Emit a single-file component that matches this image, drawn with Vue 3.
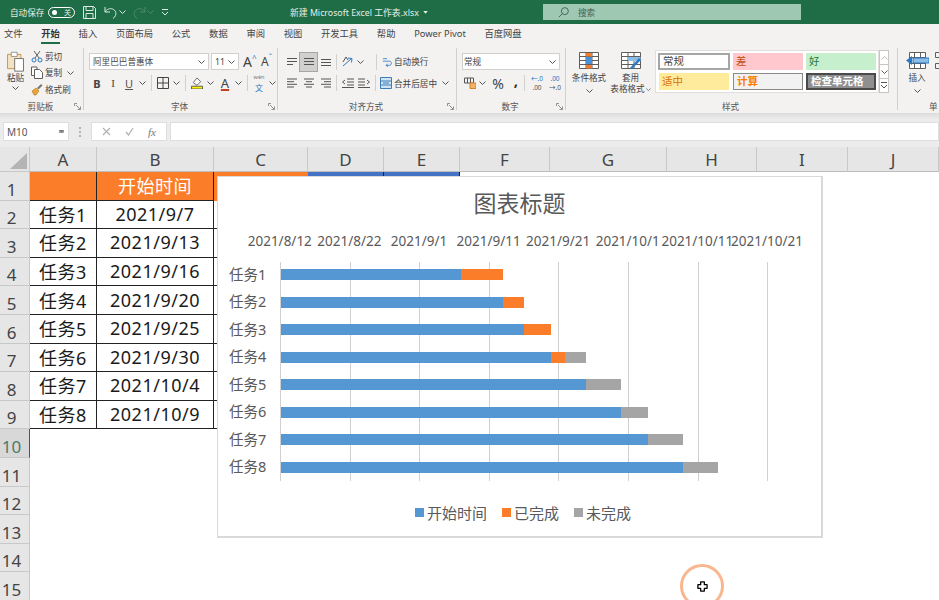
<template>
  <div class="window">
    <!-- title bar -->
    <div class="titlebar">
      <span class="autosave">自动保存</span>
      <span class="toggle"><i class="dot"></i><em>关</em></span>
      <svg class="qat save" viewBox="0 0 13 13"><path d="M.5.5h10l2 2v10H.5zM3 .5v4h7v-4M3 12.5V7.5h7v5" /></svg>
      <svg class="qat undo" viewBox="0 0 14 13"><path d="M1 1v5h5M1 6c2-3 5-4 7.5-3 3 1 4 4 3 6.500-.5 1.200-1.500 2.300-2.500 3" /></svg>
      <svg class="chev light" viewBox="0 0 7 4"><path d="M.5.5 3.500 3.500 6.500.5" /></svg>
      <svg class="qat redo" viewBox="0 0 14 13"><path d="M13 1v5H8M13 6c-2-3-5-4-7.500-3-3 1-4 4-3 6.500.5 1.200 1.500 2.300 2.500 3" /></svg>
      <svg class="chev dim" viewBox="0 0 7 4"><path d="M.5.5 3.500 3.500 6.500.5" /></svg>
      <svg class="custom" viewBox="0 0 8 7"><path d="M1 .5h6M1 3l3 3 3-3" /></svg>
      <span class="doc-name">新建 Microsoft Excel 工作表.xlsx</span>
      <svg class="chev-solid" viewBox="0 0 6 4"><path d="M0 0h6L3 3.500z" /></svg>
      <div class="search">
        <svg viewBox="0 0 12 12"><circle cx="7.500" cy="4.500" r="3.800" /><path d="M4.800 7.200 1 11" /></svg>
        <span>搜索</span>
      </div>
    </div>

    <!-- tabs -->
    <div class="tabs">
      <span v-for="t in tabs" :key="t" class="tab" :class="{ active: t === '开始' }">{{ t }}</span>
    </div>

    <!-- ribbon -->
    <div class="ribbon">
      <div class="group g-clip">
        <div class="g-body clip-body">
          <div class="paste">
            <svg viewBox="0 0 22 25">
              <path d="M1.500 4h16v17h-16z" fill="#f3e3c4" stroke="#c58a35" />
              <path d="M6 1.500h7v5H6z" fill="#fff" stroke="#8a8886" />
              <path d="M10 9h10.500v15H10z" fill="#fff" stroke="#605e5c" />
            </svg>
            <span>粘贴</span>
            <svg class="chev" viewBox="0 0 7 4"><path d="M.5.5 3.500 3.500 6.500.5" /></svg>
          </div>
          <div class="clip-list">
            <div class="clip-item">
              <svg viewBox="0 0 12 13"><path d="M3 1l5 7M9 1 4 8" fill="none" stroke="#605e5c" /><circle cx="3" cy="10" r="2" fill="none" stroke="#2b79c2" /><circle cx="9" cy="10" r="2" fill="none" stroke="#2b79c2" /></svg>
              <span>剪切</span>
            </div>
            <div class="clip-item">
              <svg viewBox="0 0 12 13"><path d="M3 9.500H.5V1H6v2M3.500 3.500h5l3 3v6h-8z" fill="#fff" stroke="#605e5c" /></svg>
              <span>复制</span>
              <svg class="chev copy-chev" viewBox="0 0 7 4"><path d="M.5.5 3.500 3.500 6.500.5" /></svg>
            </div>
            <div class="clip-item">
              <svg viewBox="0 0 12 13"><path d="M1 8l4-3 3 3-3 4H3z" fill="#e8a33d" stroke="#b9751b" stroke-width=".6" /><path d="M6 5l4-4 1.500 1.500-4 4z" fill="#777" /></svg>
              <span>格式刷</span>
            </div>
          </div>
        </div>
        <div class="g-label"><i></i><span>剪贴板</span><svg class="launcher" viewBox="0 0 7 7"><path d="M.5 3V.5H3M2 2l4 4M6.500 3.500v3h-3" /></svg></div>
      </div>
      <div class="sep"></div>

      <div class="group g-font">
        <div class="g-body">
          <div class="row first font-first">
            <div class="select font-name"><span>阿里巴巴普惠体</span><svg class="chev" viewBox="0 0 7 4"><path d="M.5.5 3.500 3.500 6.500.5" /></svg></div>
            <div class="select font-size"><span>11</span><svg class="chev" viewBox="0 0 7 4"><path d="M.5.5 3.500 3.500 6.500.5" /></svg></div>
            <span class="grow-a big">A<sup>^</sup></span>
            <span class="grow-a small">A<sup>ˇ</sup></span>
          </div>
          <div class="row second font-second">
            <b class="slot w16">B</b>
            <i class="slot w16 serif">I</i>
            <u class="slot w16">U</u>
            <span class="slot w10"><svg class="chev" viewBox="0 0 7 4"><path d="M.5.5 3.500 3.500 6.500.5" /></svg></span>
            <span class="vline v-a"></span>
            <span class="slot w16"><svg class="ic" viewBox="0 0 12 12"><path d="M.5.5h11v11H.5zM6 .5v11M.5 6h11" fill="none" stroke="#444" /></svg></span>
            <span class="slot w10"><svg class="chev" viewBox="0 0 7 4"><path d="M.5.5 3.500 3.500 6.500.5" /></svg></span>
            <span class="vline v-a"></span>
            <span class="slot w16"><svg class="ic" viewBox="0 0 12 13"><path d="M6 1 2 6l4 3 4-4z" fill="#fff" stroke="#605e5c" /><path d="M0 10h12v3H0z" fill="#fff200" /></svg></span>
            <span class="slot w10"><svg class="chev" viewBox="0 0 7 4"><path d="M.5.5 3.500 3.500 6.500.5" /></svg></span>
            <span class="slot w16 color-a">A</span>
            <span class="slot w10"><svg class="chev" viewBox="0 0 7 4"><path d="M.5.5 3.500 3.500 6.500.5" /></svg></span>
            <span class="vline v-a"></span>
            <span class="slot w16 wen"><small>wén</small><em>文</em></span>
            <span class="slot w10"><svg class="chev" viewBox="0 0 7 4"><path d="M.5.5 3.500 3.500 6.500.5" /></svg></span>
          </div>
        </div>
        <div class="g-label"><i></i><span>字体</span><svg class="launcher" viewBox="0 0 7 7"><path d="M.5 3V.5H3M2 2l4 4M6.500 3.500v3h-3" /></svg></div>
      </div>
      <div class="sep"></div>

      <div class="group g-align">
        <div class="g-body">
          <div class="row first align-first">
            <span class="slot w17"><svg class="ic" viewBox="0 0 12 9"><path d="M1 1h10M1 4h10M1 7h6" /></svg></span>
            <span class="slot w17 picked"><svg class="ic" viewBox="0 0 12 9"><path d="M1 1h10M1 4h10M1 7h10" /></svg></span>
            <span class="slot w17"><svg class="ic" viewBox="0 0 12 9"><path d="M1 2h10M1 5h10M1 8h10" /></svg></span>
            <span class="vline v-b"></span>
            <span class="slot w14"><svg class="ic" viewBox="0 0 12 12"><path d="M1 10 9 3M6 2l4 .5-.5 4" stroke="#2b79c2" /><path d="M1 6 4 1l2 3" /></svg></span>
            <span class="slot w10"><svg class="chev" viewBox="0 0 7 4"><path d="M.5.5 3.500 3.500 6.500.5" /></svg></span>
            <span class="vline v-c"></span>
            <span class="wide-btn wrap-btn"><svg class="ic" viewBox="0 0 12 12"><path d="M1 2h5M1 5h8c3 0 3 5 0 5H5M7 8l-2 2 2 2" stroke="#2b79c2" /></svg>自动换行</span>
          </div>
          <div class="row second align-second">
            <span class="slot w17"><svg class="ic" viewBox="0 0 12 10"><path d="M1 1h10M1 3.700h7M1 6.300h10M1 9h7" /></svg></span>
            <span class="slot w17"><svg class="ic" viewBox="0 0 12 10"><path d="M1 1h10M3 3.700h6M1 6.300h10M3 9h6" /></svg></span>
            <span class="slot w17"><svg class="ic" viewBox="0 0 12 10"><path d="M1 1h10M4 3.700h7M1 6.300h10M4 9h7" /></svg></span>
            <span class="vline v-b"></span>
            <span class="slot w14"><svg class="ic" viewBox="0 0 12 10"><path d="M5 1h7M5 4h7M5 7h7M0 9.500h12M3 2 .5 4 3 6" /></svg></span>
            <span class="slot w18"><svg class="ic" viewBox="0 0 12 10"><path d="M0 1h7M0 4h7M0 7h7M0 9.500h12M9 2l2.500 2L9 6" /></svg></span>
            <span class="vline v-d"></span>
            <span class="wide-btn"><svg class="ic" viewBox="0 0 12 12"><path d="M.5.5h11v11H.5z" fill="#cfe3f5" stroke="#3c7fb8" /><path d="M.5 4h11M.5 8h11M3 6h6" stroke="#3c7fb8" /></svg>合并后居中<svg class="chev merge-chev" viewBox="0 0 7 4"><path d="M.5.5 3.500 3.500 6.500.5" /></svg></span>
          </div>
        </div>
        <div class="g-label"><i></i><span>对齐方式</span><svg class="launcher" viewBox="0 0 7 7"><path d="M.5 3V.5H3M2 2l4 4M6.500 3.500v3h-3" /></svg></div>
      </div>
      <div class="sep"></div>

      <div class="group g-number">
        <div class="g-body">
          <div class="row first number-first">
            <div class="select number-name"><span>常规</span><svg class="chev" viewBox="0 0 7 4"><path d="M.5.5 3.500 3.500 6.500.5" /></svg></div>
          </div>
          <div class="row second number-second">
            <span class="slot w14"><svg class="ic" viewBox="0 0 12 12"><path d="M.5 1h9v5H.5zM3.500 1v5M6.500 1v5" /><path d="M6 6h6v5.500H6z" fill="#f2b463" stroke="#d9822b" /></svg></span>
            <span class="slot w10"><svg class="chev" viewBox="0 0 7 4"><path d="M.5.5 3.500 3.500 6.500.5" /></svg></span>
            <span class="slot w22 pct">%</span>
            <span class="slot w14 comma">,</span>
            <span class="vline v-e"></span>
            <span class="slot w18 dec"><em>←.0</em><em>.00</em></span>
            <span class="slot w18 dec"><em>.00</em><em>→.0</em></span>
          </div>
        </div>
        <div class="g-label"><i></i><span>数字</span><svg class="launcher" viewBox="0 0 7 7"><path d="M.5 3V.5H3M2 2l4 4M6.500 3.500v3h-3" /></svg></div>
      </div>
      <div class="sep"></div>

      <div class="group g-styles">
        <div class="g-body styles-body">
          <div class="big-btn cond">
            <svg viewBox="0 0 20 17"><path d="M.5.5h19v16H.5zM7 .5v16M13 .5v16M.5 4.500h19M.5 8.500h19M.5 12.500h19" fill="#fff" stroke="#605e5c" /><path d="M7 1h6v3.500H7zM7 13h6v3.500H7z" fill="#ed7d31" /><path d="M7 5h6v7H7z" fill="#4a90d9" /></svg>
            <span>条件格式</span>
            <svg class="chev" viewBox="0 0 7 4"><path d="M.5.5 3.500 3.500 6.500.5" /></svg>
          </div>
          <div class="big-btn table">
            <svg viewBox="0 0 20 17"><path d="M.5.5h19v16H.5zM7 .5v16M13 .5v16M.5 4.500h19M.5 8.500h19M.5 12.500h19" fill="#fff" stroke="#605e5c" /><path d="M7 5h12.500v4H7z" fill="#8cbce8" /><path d="M9 16 18 6l2 2-9 9z" fill="#2b79c2" /></svg>
            <span>套用</span>
            <span>表格格式<svg class="chev inline" viewBox="0 0 7 4"><path d="M.5.5 3.500 3.500 6.500.5" /></svg></span>
          </div>
          <div class="gallery">
            <span class="cs normal">常规</span>
            <span class="cs bad">差</span>
            <span class="cs good">好</span>
            <span class="cs neutral">适中</span>
            <span class="cs calc">计算</span>
            <span class="cs check">检查单元格</span>
          </div>
          <div class="scroller">
            <span><svg class="chev" viewBox="0 0 7 4"><path d="M.5 3.500 3.500.5l3 3" /></svg></span>
            <span><svg class="chev" viewBox="0 0 7 4"><path d="M.5.5 3.500 3.500 6.500.5" /></svg></span>
            <span><svg class="custom dark" viewBox="0 0 8 7"><path d="M1 .5h6M1 3l3 3 3-3" /></svg></span>
          </div>
        </div>
        <div class="g-label"><i></i><span>样式</span><i></i></div>
      </div>
      <div class="sep"></div>

      <div class="group g-cells">
        <div class="g-body cells-body">
          <div class="big-btn insert">
            <svg viewBox="0 0 23 17"><path d="M3.500.5h16v16h-16zM8.500.5v16M14.500.5v16M3.500 5.500h16M3.500 11.500h16" fill="#fff" stroke="#605e5c" /><path d="M7 6h16v5H7z" fill="#8cbce8" stroke="#2b79c2" /><path d="M0 8.500 6 4v9z" fill="#2b79c2" /></svg>
            <span>插入</span>
            <svg class="chev" viewBox="0 0 7 4"><path d="M.5.5 3.500 3.500 6.500.5" /></svg>
          </div>
          <svg class="cut-icon" viewBox="0 0 8 17"><path d="M.5.5h8M.5.5v5h8M.5 11.500h8v5H.5z" fill="none" stroke="#605e5c" /></svg>
        </div>
        <div class="g-label cells-label"><span>单</span></div>
      </div>
    </div>

    <!-- formula bar -->
    <div class="formula">
      <div class="namebox"><span>M10</span><svg class="chev-solid gray" viewBox="0 0 6 4"><path d="M0 0h6L3 3.500z" /></svg></div>
      <div class="grip"><i></i><i></i><i></i></div>
      <div class="fx-box">
        <svg viewBox="0 0 9 9"><path d="M1 1l7 7M8 1 1 8" /></svg>
        <svg viewBox="0 0 9 9"><path d="M1 5l2.500 3L8 1" /></svg>
        <em>fx</em>
      </div>
      <div class="fx-input"></div>
    </div>

    <!-- sheet -->
    <div class="sheet">
      <div class="corner"><i></i></div>
      <div v-for="c in columns" :key="c" class="col-head">{{ c }}</div>

      <template v-for="(row, r) in rows" :key="r">
        <div class="row-head" :class="{ current: r === 9 }">{{ r + 1 }}</div>
        <div
          v-for="(c, ci) in columns"
          :key="c"
          class="cell"
          :class="cellClass(r, ci)"
        >{{ row[ci] }}</div>
      </template>

      <!-- floating chart -->
      <div class="chart">
        <div class="chart-title">图表标题</div>
        <div class="axis">
          <span v-for="d in axisDates" :key="d">{{ d }}</span>
        </div>
        <div class="plot">
          <i
            v-for="(d, i) in axisDates"
            :key="d"
            class="gridline"
            :style="{ left: 52 + i * 69.6 + 'px' }"
          ></i>
          <div v-for="t in tasks" :key="t.name" class="plot-row">
            <span class="plot-label">{{ t.name }}</span>
            <span class="seg blue" :style="{ width: t.start * dayWidth + 'px' }"></span>
            <span class="seg orange" :style="{ width: t.done * dayWidth + 'px' }"></span>
            <span class="seg gray" :style="{ width: t.todo * dayWidth + 'px' }"></span>
          </div>
        </div>
        <div class="legend">
          <span><i class="blue"></i>开始时间</span>
          <span><i class="orange"></i>已完成</span>
          <span><i class="gray"></i>未完成</span>
        </div>
      </div>
    </div>

    <!-- recorded mouse pointer -->
    <div class="pointer">
      <svg viewBox="0 0 12 12"><path d="M4 1h4v3h3v4H8v3H4V8H1V4h3z" fill="#fff" stroke="#000" stroke-width="1.400" stroke-linejoin="round" /></svg>
    </div>
  </div>
</template>

<script setup>
const tabs = ['文件', '开始', '插入', '页面布局', '公式', '数据', '审阅', '视图', '开发工具', '帮助', 'Power Pivot', '百度网盘']
const columns = ['A', 'B', 'C', 'D', 'E', 'F', 'G', 'H', 'I', 'J']
const axisDates = ['2021/8/12', '2021/8/22', '2021/9/1', '2021/9/11', '2021/9/21', '2021/10/1', '2021/10/11', '2021/10/21']
const dayWidth = 6.93

const tasks = [
  { name: '任务1', date: '2021/9/7', start: 26, done: 6, todo: 0 },
  { name: '任务2', date: '2021/9/13', start: 32, done: 3, todo: 0 },
  { name: '任务3', date: '2021/9/16', start: 35, done: 4, todo: 0 },
  { name: '任务4', date: '2021/9/20', start: 39, done: 2, todo: 3 },
  { name: '任务5', date: '2021/9/25', start: 44, done: 0, todo: 5 },
  { name: '任务6', date: '2021/9/30', start: 49, done: 0, todo: 4 },
  { name: '任务7', date: '2021/10/4', start: 53, done: 0, todo: 5 },
  { name: '任务8', date: '2021/10/9', start: 58, done: 0, todo: 5 },
]

const rows = [
  ['', '开始时间'],
  ...tasks.map((t) => [t.name, t.date]),
  ...Array.from({ length: 6 }, () => []),
]

const cellClass = (r, c) => ({
  head: r === 0 && c < 3,
  sel: r === 0 && (c === 3 || c === 4),
  boxed: c < 2 && r < 9,
  under: c === 2 && r < 9,
})
</script>

<style>
html, body {
  margin: 0;
  overflow: hidden;
  background: #fff;
}
</style>

<style scoped>
.window {
  position: relative;
  width: 939px;
  height: 600px;
  overflow: hidden;
  font-family: "Noto Sans", "Noto Sans CJK SC", sans-serif;
  color: #444;
  background: #fff;
}

/* title bar */
.titlebar {
  display: flex;
  align-items: center;
  height: 24px;
  padding-left: 10px;
  box-sizing: border-box;
  background: #1f6d46;
  color: #e6efe9;
  font-size: 8.6px;
}
.autosave { width: 38px; white-space: nowrap; }
.toggle {
  display: flex;
  align-items: center;
  justify-content: space-between;
  width: 27px;
  height: 11px;
  padding: 0 3px;
  box-sizing: border-box;
  border: 1px solid #fff;
  border-radius: 6px;
  font-size: 7px;
}
.toggle .dot { width: 5px; height: 5px; border-radius: 50%; background: #fff; }
.toggle em { font-style: normal; }
.qat { fill: none; stroke: #dfeae4; stroke-width: 1; }
.save { width: 13px; height: 13px; margin-left: 8px; }
.undo { width: 14px; height: 13px; margin-left: 8px; }
.titlebar .light { margin-left: 1px; stroke: #dfeae4; }
.redo { width: 14px; height: 13px; margin-left: 6px; stroke: #4f8a6d; }
.titlebar .dim { margin-left: 1px; stroke: #4f8a6d; }
.custom { width: 8px; height: 7px; margin-left: 7px; fill: none; stroke: #dfeae4; }
.custom.dark { margin: 0; stroke: #555; }
.doc-name { margin-left: 121px; width: 129px; font-size: 8.8px; white-space: nowrap; }
.chev-solid { width: 5px; height: 3px; margin-left: 4px; fill: #e6efe9; }
.chev-solid.gray { fill: #777; margin: 0; }
.search {
  display: flex;
  align-items: center;
  width: 258px;
  height: 16px;
  margin-left: 115px;
  padding-left: 15px;
  box-sizing: border-box;
  background: #9fc8b3;
  color: #3f5f50;
}
.search svg { width: 11px; height: 11px; fill: none; stroke: #3f5f50; }
.search span { margin-left: 9px; font-size: 8.6px; }

/* tabs */
.tabs {
  display: flex;
  gap: 18.7px;
  height: 20px;
  padding-left: 4px;
  background: #f3f2f1;
  font-size: 9.3px;
  line-height: 20px;
  white-space: nowrap;
}
.tab.active {
  font-weight: 700;
  color: #333;
  box-shadow: inset 0 -2px 0 #1f6d46;
}

/* ribbon */
.ribbon {
  display: flex;
  height: 69px;
  background: #f3f2f1;
  font-size: 8.6px;
  overflow: hidden;
}
.sep { flex: none; width: 1px; height: 62px; margin-top: 4px; background: #d2d0ce; }
.group { flex: none; display: flex; flex-direction: column; }
.g-clip { width: 83px; }
.g-font { width: 193px; }
.g-align { width: 178px; }
.g-number { width: 108px; }
.g-styles { width: 331px; }
.g-cells { width: 41px; }
.g-body { height: 56px; }
.g-label {
  display: grid;
  grid-template-columns: 1fr auto 1fr;
  align-items: center;
  height: 12px;
  padding-right: 2px;
  white-space: nowrap;
  color: #555;
}
.launcher { justify-self: end; width: 7px; height: 7px; fill: none; stroke: #777; stroke-width: .8; }
.chev { width: 7px; height: 4px; flex: none; fill: none; stroke: #555; stroke-width: 1; }
.ic { width: 12px; height: 12px; fill: none; stroke: #555; stroke-width: 1; }

.row { display: flex; align-items: center; }
.row.first { height: 17px; margin-top: 9px; }
.row.second { height: 18px; margin-top: 4px; }
.slot { display: flex; align-items: center; justify-content: center; height: 18px; flex: none; font-style: normal; }
.w10 { width: 10px; }
.w14 { width: 14px; }
.w16 { width: 16px; }
.w17 { width: 17px; }
.w18 { width: 18px; }
.w22 { width: 22px; }
.vline { flex: none; width: 1px; height: 16px; background: #d2d0ce; }

.select {
  display: flex;
  align-items: center;
  justify-content: space-between;
  height: 17px;
  padding: 0 3px;
  box-sizing: border-box;
  background: #fff;
  border: 1px solid #d2d0ce;
  white-space: nowrap;
}

/* clipboard */
.clip-body { display: flex; }
.paste { display: flex; flex-direction: column; align-items: center; width: 31px; padding-top: 7px; }
.paste svg:first-child { width: 19px; height: 21px; }
.paste span { margin-top: -1px; line-height: 14px; }
.paste .chev { margin-top: 1px; }
.clip-list { display: flex; flex-direction: column; padding-top: 4px; }
.clip-item { display: flex; align-items: center; height: 16.5px; }
.clip-item svg:first-child { width: 12px; height: 13px; margin-right: 2px; }
.clip-item span { white-space: nowrap; }
.copy-chev { margin-left: 5px; }

/* font */
.font-first, .font-second { padding-left: 5px; }
.font-name { width: 120px; }
.font-size { width: 28px; margin-left: 2px; }
.grow-a { display: flex; margin-left: 4px; color: #444; line-height: 17px; }
.grow-a sup { font-size: 8px; line-height: 10px; color: #2b79c2; vertical-align: top; }
.grow-a.big { font-size: 14px; width: 15px; }
.grow-a.small { font-size: 12px; width: 12px; margin-left: 3px; }
.font-second { font-size: 11px; }
.font-second b { font-weight: 700; }
.serif { font-family: "Liberation Serif", serif; }
.font-second u { color: #555; }
.v-a { margin: 0 3px 0 4px; }
.color-a { font-size: 13px; margin-left: 2px; text-decoration: underline 2px #c8401f; }
.wen { flex-direction: column; color: #2b79c2; }
.wen small { font-size: 5.5px; line-height: 9px; color: #777; }
.wen em { font-style: normal; font-size: 8px; line-height: 12px; }

/* alignment */
.align-first, .align-second { padding-left: 5px; }
.picked { background: #d2d0ce; outline: 1px solid #a8a6a4; }
.v-b { margin: 0 4px 0 2px; }
.v-c { margin: 0 5px 0 11px; }
.v-d { margin: 0 4px 0 2px; }
.wide-btn { display: flex; align-items: center; white-space: nowrap; }
.wide-btn > .ic { margin-right: 2px; }
.wrap-btn > .ic { width: 10px; height: 10px; }
.merge-chev { margin-left: 5px; }

/* number */
.number-first { padding-left: 5px; }
.number-name { width: 98px; padding-left: 1px; }
.number-second { padding-left: 6px; }
.pct { font-size: 14px; }
.comma { font-size: 15px; font-weight: 700; line-height: 10px; color: #333; padding-bottom: 7px; box-sizing: border-box; }
.v-e { margin: 0 3px 0 1px; }
.dec { flex-direction: column; font-size: 6.5px; line-height: 9px; }
.dec em { font-style: normal; color: #2b79c2; }
.dec em + em { color: #555; }

/* styles */
.styles-body { display: flex; }
.big-btn { display: flex; flex-direction: column; align-items: center; flex: none; white-space: nowrap; line-height: 11px; }
.big-btn > svg:first-child { width: 20px; height: 17px; margin-top: 8px; margin-bottom: 4px; }
.big-btn > .chev { margin-top: 5px; }
.cond { width: 40px; margin-left: 3px; }
.table { width: 43px; }
.table span + span { display: flex; align-items: center; }
.chev.inline { width: 5px; height: 3px; margin-left: 1px; }
.gallery {
  display: grid;
  grid-template-columns: 72px 70px 70px;
  grid-auto-rows: 17px;
  gap: 3px 3px;
  flex: none;
  width: 224px;
  height: 43px;
  margin: 6px 0 0 3px;
  padding: 2px;
  box-sizing: border-box;
  background: #fff;
  border: 1px solid #e1dfdd;
  font-size: 10.5px;
}
.cs { padding-left: 3px; line-height: 16px; box-sizing: border-box; white-space: nowrap; }
.normal { border: 2px solid #a6a6a6; line-height: 13px; color: #444; }
.bad { background: #ffc7ce; color: #c0500c; }
.good { background: #c6efce; color: #1d7a3c; }
.neutral { background: #ffeb9c; color: #d9730d; margin: 0 1px; }
.calc { background: #f2f2f2; border: 1px solid #8a8a8a; color: #fa7d00; font-weight: 700; line-height: 14px; }
.check { background: #8f8f8f; border: 2px solid #4a4a4a; color: #fff; font-weight: 700; line-height: 13px; }
.scroller { display: flex; flex-direction: column; flex: none; width: 10px; height: 43px; margin-top: 6px; }
.scroller span {
  display: flex;
  flex: 1;
  align-items: center;
  justify-content: center;
  border: 1px solid #c8c6c4;
  border-top-width: 0;
  background: #fff;
}
.scroller span:first-child { border-top-width: 1px; }
.scroller span:first-child .chev { stroke: #bbb; }

/* cells */
.cells-body { display: flex; }
.insert { width: 36px; margin-left: 1px; }
.insert > svg:first-child { width: 23px; }
.cut-icon { flex: none; width: 8px; height: 17px; margin-top: 8px; }
.cells-label { display: block; padding-left: 31px; }

/* formula bar */
.formula {
  display: flex;
  height: 34px;
  padding: 9px 0 6px 3px;
  box-sizing: border-box;
  background: linear-gradient(#dcdcdc, #ececec 6px);
}
.namebox {
  display: flex;
  align-items: center;
  justify-content: space-between;
  width: 66px;
  padding: 0 4px 0 3px;
  box-sizing: border-box;
  background: #fff;
  border: 1px solid #dedede;
  font-size: 10px;
  color: #555;
}
.grip { display: flex; flex-direction: column; justify-content: center; gap: 2px; width: 22px; align-items: center; }
.grip i { width: 2px; height: 2px; background: #b5b5b5; }
.fx-box {
  display: flex;
  align-items: center;
  justify-content: space-around;
  width: 76px;
  padding: 0 3px;
  box-sizing: border-box;
  background: #fff;
  border: 1px solid #dedede;
}
.fx-box svg { width: 9px; height: 9px; fill: none; stroke: #b0b0b0; stroke-width: 1.2; }
.fx-box em { font-family: "Liberation Serif", serif; font-size: 11px; color: #777; }
.fx-input { flex: 1; margin-left: 3px; background: #fff; border: 1px solid #dedede; }

/* sheet */
.sheet {
  position: relative;
  display: grid;
  grid-template-columns: 30px 67px 117px 94px 76px 76px 90px 117px 90px 91px 91px;
  grid-template-rows: 25px repeat(15, 28.6px);
}
.corner { background: #e6e6e6; border-right: 1px solid #c8c8c8; border-bottom: 1px solid #c8c8c8; box-sizing: border-box; padding: 6px 0 0 10px; }
.corner i {
  display: block;
  width: 17px;
  height: 16px;
  background: #b4b4b4;
  clip-path: polygon(100% 0, 100% 100%, 0 100%);
}
.col-head {
  display: flex;
  align-items: center;
  justify-content: center;
  box-sizing: border-box;
  background: #e6e6e6;
  border-right: 1px solid #c8c8c8;
  border-bottom: 1px solid #bdbdbd;
  font-size: 17px;
  color: #444;
}
.row-head {
  display: flex;
  align-items: flex-end;
  justify-content: center;
  padding-right: 6px;
  box-sizing: border-box;
  background: #e6e6e6;
  border-right: 1px solid #c8c8c8;
  border-bottom: 1px solid #c8c8c8;
  font-size: 17px;
  line-height: 21px;
  color: #444;
}
.row-head.current { background: #d8d8d8; color: #4d7a65; border-right: 1px solid #217346; }
.cell {
  display: flex;
  align-items: center;
  justify-content: center;
  padding-bottom: 1px;
  box-sizing: border-box;
  font-size: 18px;
  letter-spacing: .5px;
  color: #1a1a1a;
  white-space: nowrap;
}
.cell.boxed { border-right: 1px solid #222; border-bottom: 1px solid #222; }
.cell.head { background: #fb7d29; color: #fff; border-color: #222; }
.cell.sel { background: #4472c4; border-right: 1px solid #222; border-bottom: 0; }
.cell.under { border-bottom: 1px solid #222; }
.cell.head.under { border-bottom: 0; }

/* chart */
.chart {
  position: absolute;
  left: 217px;
  top: 29px;
  width: 606px;
  height: 362px;
  box-sizing: border-box;
  background: #fff;
  border: 1px solid #d9d9d9;
  border-width: 1px 2px 2px 1px;
  color: #595959;
}
.chart-title { margin-top: 10px; text-align: center; font-size: 23px; line-height: 32px; }
.axis { display: flex; margin: 13px 0 0 27px; height: 18px; font-size: 13.5px; line-height: 18px; }
.axis span { display: flex; justify-content: center; flex: none; width: 69.6px; white-space: nowrap; }
.plot { position: relative; width: 540px; margin: 11px 0 0 10px; }
.gridline { position: absolute; top: 1px; bottom: 0; width: 1px; background: #d0d0d0; }
.plot-row { position: relative; display: flex; align-items: center; height: 27.47px; }
.plot-label { flex: none; width: 52px; margin: 0 0 2px 1px; font-size: 14.5px; line-height: 20px; white-space: nowrap; }
.seg { height: 11px; flex: none; }
.blue { background: #5597d3; }
.orange { background: #fb7d29; }
.gray { background: #a5a5a5; }
.legend {
  display: flex;
  justify-content: center;
  gap: 15px;
  margin-top: 22px;
  padding-left: 7px;
  font-size: 15px;
  line-height: 20px;
}
.legend span { display: flex; align-items: center; }
.legend i { width: 9px; height: 9px; margin-right: 3px; }

/* pointer highlight */
.pointer {
  position: absolute;
  left: 680px;
  top: 564px;
  display: flex;
  align-items: center;
  justify-content: center;
  width: 44px;
  height: 44px;
  box-sizing: border-box;
  border: 3px solid #f9b78f;
  border-radius: 50%;
}
.pointer svg { width: 11px; height: 11px; }
</style>
